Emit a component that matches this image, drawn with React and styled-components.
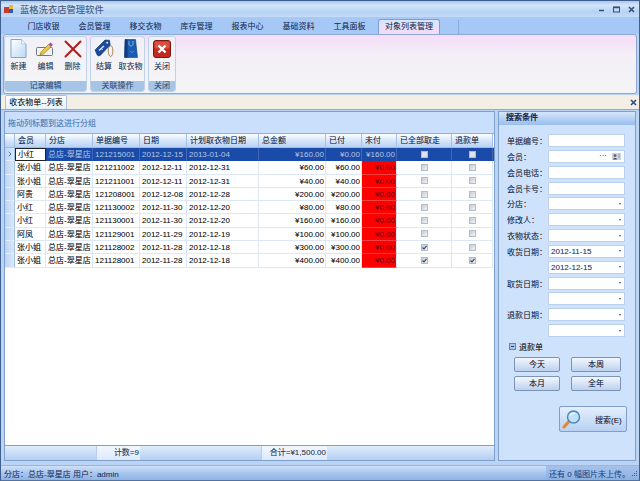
import React from 'react';
import styled, { createGlobalStyle } from 'styled-components';

const Global = createGlobalStyle`
  html, body { margin: 0; padding: 0; background: #bcd4f4; overflow: hidden; }
  * { box-sizing: border-box; }
`;

const COLS = '10px 31px 47px 47px 47px 72px 67px 36px 35px 55px 41px';
const FONT = '"Liberation Sans", "Noto Sans CJK SC", sans-serif';

const Window = styled.div`
  width: 640px;
  height: 481px;
  display: flex;
  flex-direction: column;
  font-family: ${FONT};
  font-size: 8px;
  color: #111;
  text-shadow: 0 0 0.4px rgba(20, 30, 60, 0.3);
  background: #bcd4f4;
  border: 1px solid #3f5f8f;
  border-bottom-color: #54749f;
`;

const TitleBar = styled.div`
  height: 16px;
  display: flex;
  align-items: center;
  padding: 0 3px;
  gap: 6px;
  background: linear-gradient(#a9c6ea, #d3e5fa 25%, #b7d2f4 70%, #c6dcf8);
`;

const TitleText = styled.span`
  flex: 1;
  font-size: 9.3px;
  color: #4a5f80;
`;

const WinControls = styled.div`
  display: flex;
  gap: 8px;
  padding-right: 1px;
`;

const RibbonTabs = styled.div`
  height: 17px;
  display: flex;
  align-items: flex-end;
  padding-left: 17px;
  background: #a6c8f6;
`;

const RibbonTab = styled.div`
  width: ${p => (p.$active ? '62px' : '51px')};
  margin-left: ${p => (p.$active ? '3px' : '0')};
  height: ${p => (p.$active ? '15px' : '14px')};
  line-height: 14px;
  text-align: center;
  color: #1d3558;
  border-radius: 3px 3px 0 0;
  ${p => p.$active && `
    background: linear-gradient(#d9e4fa, #f6dcfa);
    border: 1px solid #7d9fd6;
    border-bottom: none;
  `}
`;

const TabEnd = styled.div`
  width: 1px;
  height: 14px;
  margin-left: 18px;
  background: #8caad6;
`;

const RibbonBody = styled.div`
  height: 60px;
  margin: 0 2px;
  padding: 1px 0;
  display: flex;
  gap: 3px;
  background: linear-gradient(#f6dcfa, #f3eff6 35%, #f4f4f5);
  border: 1px solid #8aa9d6;
  border-radius: 3px;
`;

const RibbonGroup = styled.div`
  width: ${p => p.$w}px;
  display: flex;
  flex-direction: column;
  background: linear-gradient(#f0f0f6, #f6f6f8);
  border: 1px solid #c0d2ea;
  border-radius: 3px;
  overflow: hidden;
`;

const GroupItems = styled.div`
  flex: 1;
  display: flex;
`;

const GroupLabel = styled.div`
  height: 10px;
  line-height: 10px;
  text-align: center;
  color: #35557f;
  background: #a6c4e6;
`;

const BigButton = styled.div`
  width: ${p => p.$w}px;
  display: flex;
  flex-direction: column;
  align-items: center;
  padding-top: 2px;
  gap: 2px;
  color: #1f3d66;
  white-space: nowrap;
`;

const IconBox = styled.div`
  height: 19px;
  display: flex;
  align-items: center;
  justify-content: center;
`;

const DocStrip = styled.div`
  height: 15px;
  margin-top: 1px;
  display: flex;
  align-items: flex-end;
  justify-content: space-between;
  padding: 0 2px 0 4px;
  background: #f3eee6;
  border-bottom: 1px solid #8fabd4;
`;

const DocTab = styled.div`
  width: 62px;
  height: 14px;
  line-height: 13px;
  text-align: center;
  background: linear-gradient(#fff, #e6f0fc);
  border: 1px solid #a9c0e0;
  border-bottom: none;
  border-radius: 2px 2px 0 0;
`;

const DocClose = styled.div`
  height: 14px;
  display: flex;
  align-items: center;
`;

const Main = styled.div`
  flex: 1;
  display: flex;
  gap: 3px;
  padding: 1px 3px 2px 3px;
  min-height: 0;
`;

const GridPanel = styled.div`
  width: 491px;
  display: flex;
  flex-direction: column;
  background: #fff;
  border: 1px solid #7f9fcc;
`;

const GroupHint = styled.div`
  height: 22px;
  padding: 5px 3px 0;
  color: #4f7fbc;
  background: #c9dffb;
  border-bottom: 1px solid #8fb0dc;
`;

const HeadRow = styled.div`
  display: grid;
  grid-template-columns: ${COLS};
  height: 14px;
  border-bottom: 1px solid #9dbbe4;
`;

const HeadCell = styled.div`
  padding-left: 3px;
  line-height: 13px;
  color: #1a2a44;
  background: linear-gradient(#fbfdff, #d3e4fa 55%, #b9d2f4);
  border-right: 1px solid #a4c0e6;
  white-space: nowrap;
`;

const Rows = styled.div`
  flex: 1;
`;

const Row = styled.div`
  display: grid;
  grid-template-columns: ${COLS};
  height: 13.3px;
  color: ${p => (p.$selected ? '#b6cbea' : '#111')};
  background: ${p => (p.$selected ? '#1b4ba8' : '#fff')};
`;

const RowHead = styled.div`
  display: flex;
  align-items: center;
  justify-content: center;
  background: linear-gradient(90deg, #bcd4f4, #d9e8fb);
  border-right: 1px solid #a4c0e6;
  border-bottom: 1px solid #e4eefb;
`;

const Cell = styled.div`
  padding: 0 ${p => (p.$right ? '1px' : '3px')} 0 ${p => (p.$pad ?? 3)}px;
  line-height: 13px;
  overflow: hidden;
  text-align: ${p => (p.$right ? 'right' : 'left')};
  white-space: nowrap;
  border-right: 1px solid ${p => (p.$selected ? '#3f69b8' : '#dce8f8')};
  border-bottom: 1px solid ${p => (p.$selected ? '#1b4ba8' : '#dce8f8')};
`;

const FocusCell = styled(Cell)`
  color: #111;
  background: #fff;
  border: 1px solid #222;
  line-height: 11px;
`;

const UnpaidCell = styled(Cell)`
  color: ${p => (p.$selected ? '#b6cbea' : '#7c0008')};
  background: ${p => (p.$selected ? 'transparent' : '#ff0000')};
  border-bottom-color: ${p => (p.$selected ? '#1b4ba8' : '#f04040')};
`;

const CheckCell = styled(Cell)`
  display: flex;
  align-items: center;
  justify-content: center;
  padding: 0;
`;

const Check = styled.span`
  width: 7px;
  height: 7px;
  display: flex;
  align-items: center;
  justify-content: center;
  background: ${p => (p.$selected ? '#dfe3ea' : 'linear-gradient(135deg, #c4cad4, #f2f4f7)')};
  border: 1px solid #b4bcc8;
`;

const FootRow = styled.div`
  display: grid;
  grid-template-columns: 91px 44px 121px 66px 1fr;
  height: 15px;
  background: linear-gradient(#e0edfc, #b4cff3);
  border-top: 1px solid #7f9fcc;
`;

const FootCell = styled.div`
  line-height: 13px;
  text-align: right;
  padding-right: 1px;
  color: #2a3c58;
  white-space: nowrap;
  background: ${p => (p.$filled ? 'linear-gradient(#f2f7fe, #dce9fb)' : 'transparent')};
  border-left: ${p => (p.$filled ? '1px solid #b6cdec' : 'none')};
`;

const SearchPanel = styled.div`
  width: 138px;
  display: flex;
  flex-direction: column;
  background: #cfe2fb;
  border: 1px solid #7f9fcc;
`;

const PanelHead = styled.div`
  height: 13px;
  line-height: 12px;
  padding-left: 7px;
  font-weight: bold;
  color: #122c5c;
  background: linear-gradient(#d6e7fc, #98bdee);
`;

const Form = styled.div`
  display: grid;
  grid-template-columns: 41px 77px;
  grid-auto-rows: 13px;
  row-gap: 2.85px;
  padding: 9px 0 0 8px;
  align-items: center;
`;

const Label = styled.label`
  color: #1d2b44;
  white-space: nowrap;
`;

const Field = styled.div`
  grid-column: 2;
  height: 13px;
  display: flex;
  align-items: center;
  justify-content: space-between;
  padding: 0 3px 0 2px;
  color: #1b3a6c;
  background: #fff;
  border: 1px solid #b9d0ee;
`;

const Arrow = styled.span`
  margin-left: auto;
  width: 0;
  height: 0;
  border-left: 1.5px solid transparent;
  border-right: 1.5px solid transparent;
  border-top: 2px solid #2a4a7a;
`;

const Dots = styled.span`
  margin-left: auto;
  margin-right: 5px;
  line-height: 8px;
  color: #444;
`;

const RefundRow = styled.div`
  display: flex;
  align-items: center;
  gap: 3px;
  margin: 3px 0 0 10px;
  height: 12px;
`;

const Expander = styled.span`
  width: 7px;
  height: 7px;
  display: flex;
  align-items: center;
  justify-content: center;
  background: #a9c5ec;
  border: 1px solid #5c86c4;
`;

const Bar = styled.span`
  width: 3px;
  height: 1px;
  background: #1d3f8c;
`;

const QuickGrid = styled.div`
  display: grid;
  grid-template-columns: 46px 50px;
  grid-auto-rows: 15px;
  column-gap: 11px;
  row-gap: 4px;
  margin: 5px 0 0 15px;
`;

const QuickButton = styled.div`
  text-align: center;
  line-height: 13px;
  color: #15233c;
  background: linear-gradient(#f2f7fe, #bcd1ee);
  border: 1px solid #7c93b6;
  border-radius: 2px;
`;

const SearchButton = styled.div`
  width: 68px;
  height: 26px;
  margin: 15px 0 0 60px;
  display: flex;
  align-items: center;
  gap: 13px;
  padding-left: 2px;
  color: #15233c;
  background: linear-gradient(#e4effd, #b8d1f2);
  border: 1px solid #7f9fcc;
  border-radius: 2px;
`;

const StatusBar = styled.div`
  height: 15px;
  margin-top: 2px;
  display: flex;
  align-items: center;
  padding-left: 3px;
  color: #1f3a66;
  background: linear-gradient(#cfe0f8, #a8c6ee 50%, #8fb3e6);
  border-top: 1px solid #9db5d6;
`;

const StatusLeft = styled.div`
  flex: 1;
`;

const StatusRight = styled.div`
  width: 93px;
  height: 100%;
  display: flex;
  align-items: center;
  justify-content: space-between;
  padding: 0 1px 0 3px;
  color: #2a4f88;
  white-space: nowrap;
  background: linear-gradient(#a6c2ea, #8cb0e4);
`;

const NewIcon = () => (
  <svg width="17" height="19" viewBox="0 0 17 19">
    <defs><linearGradient id="pg" x1="0" y1="0" x2="1" y2="1"><stop offset="0" stopColor="#fff" /><stop offset="1" stopColor="#bcd8f4" /></linearGradient></defs>
    <path d="M1 .5H11.5L16 5V18.5H1Z" fill="url(#pg)" stroke="#7fa6d4" strokeWidth="1" />
    <path d="M11.5 .5V5H16" fill="#eef5fd" stroke="#9fc0e2" strokeWidth=".7" />
  </svg>
);

const EditIcon = () => (
  <svg width="19" height="14" viewBox="0 0 19 14">
    <rect x=".5" y="5.5" width="16" height="8" rx="1" fill="#f4f4ee" stroke="#6a7684" strokeWidth="1" />
    <path d="M5 10L12.5 2.5L15 4.8L7.5 12L4 12.6Z" fill="#f0c83c" stroke="#8a6a1c" strokeWidth=".6" />
    <path d="M12.5 2.5L14.6 .5L17 2.8L15 4.8Z" fill="#a050c0" />
  </svg>
);

const CrossIcon = () => (
  <svg width="18" height="18" viewBox="0 0 18 18">
    <path d="M1.5 1.5L16.5 16.5M16.5 1.5L1.5 16.5" stroke="#b01c18" strokeWidth="2" strokeLinecap="round" />
  </svg>
);

const TagIcon = () => (
  <svg width="20" height="19" viewBox="0 0 20 19">
    <ellipse cx="16.6" cy="12" rx="2.3" ry="5.5" fill="none" stroke="#a88a64" strokeWidth="1" />
    <path d="M1 11L11 1L15.5 1.2L16.2 6L6.2 16.5Q4.5 17.5 3.2 16Z" fill="#1a4a9e" stroke="#102c66" strokeWidth=".6" />
    <path d="M5 11.5L10 7" stroke="#d6e4f8" strokeWidth="1.5" />
    <path d="M7 9L8.5 11" stroke="#d6e4f8" strokeWidth="1" />
    <circle cx="13.2" cy="3.8" r="1" fill="#dfe9f8" />
  </svg>
);

const BagIcon = () => (
  <svg width="14" height="19" viewBox="0 0 14 19">
    <path d="M1 .5H11.5L13.5 18.5H.5Z" fill="#1b5bb0" stroke="#123c80" strokeWidth=".6" />
    <path d="M1 .5H3.5V18.5H.5Z" fill="#0e3a80" />
    <path d="M5 2V5.5C5.5 7.5 8.5 7.5 9 5.5V2" fill="none" stroke="#9cd0f0" strokeWidth=".8" />
    <path d="M6 12L8 13.5L10 12" fill="none" stroke="#5a9ce0" strokeWidth=".8" />
  </svg>
);

const CloseIcon = () => (
  <svg width="18" height="18" viewBox="0 0 18 18">
    <rect x=".5" y=".5" width="17" height="17" rx="2.5" fill="#c22a20" stroke="#7c1610" />
    <rect x="1.5" y="1.5" width="15" height="7" rx="1.5" fill="#dc4e40" />
    <path d="M5.5 5.5L12.5 12.5M12.5 5.5L5.5 12.5" stroke="#fff" strokeWidth="2.4" />
  </svg>
);

const GlassIcon = () => (
  <svg width="20" height="20" viewBox="0 0 20 20">
    <path d="M2 18L7 12.5" stroke="#e08a28" strokeWidth="3" strokeLinecap="round" />
    <circle cx="11.5" cy="8" r="6" fill="#bfe2f8" stroke="#4a86b8" strokeWidth="1.4" />
    <path d="M8 6.5C9 4.5 11 4 13 4.5" fill="none" stroke="#fff" strokeWidth="1.2" />
  </svg>
);

const AppIcon = () => (
  <svg width="10" height="10" viewBox="0 0 10 10">
    <rect x="0" y="3" width="5" height="6" fill="#c8402c" />
    <rect x="5" y="1" width="4" height="4" fill="#e8b83c" />
    <rect x="5" y="5" width="4" height="4" fill="#2c5cb0" />
  </svg>
);

const Grip = () => (
  <svg width="6" height="6" viewBox="0 0 6 6">
    <path d="M4 1h1v1H4zM2 3h1v1H2zM4 3h1v1H4zM0 5h1v1H0zM2 5h1v1H2zM4 5h1v1H4z" fill="#3f6498" />
  </svg>
);

const Tick = () => (
  <svg width="5" height="5" viewBox="0 0 5 5">
    <path d="M.5 2.5L2 4L4.5 .8" fill="none" stroke="#2a3f70" strokeWidth="1.1" />
  </svg>
);

const SmallX = ({ color = '#33507c' }) => (
  <svg width="7" height="7" viewBox="0 0 7 7">
    <path d="M1 1L6 6M6 1L1 6" stroke={color} strokeWidth="1.6" />
  </svg>
);

const RowArrow = () => (
  <svg width="4" height="6" viewBox="0 0 4 6">
    <path d="M.8 .8L3 3L.8 5.2" fill="none" stroke="#3a6cc0" strokeWidth="1" />
  </svg>
);

const tabs = ['门店收银', '会员管理', '移交衣物', '库存管理', '报表中心', '基础资料', '工具面板'];
const heads = ['', '会员', '分店', '单据编号', '日期', '计划取衣物日期', '总金额', '已付', '未付', '已全部取走', '退款单'];

const orders = [
  { who: '小红', no: '121215001', date: '2012-12-15', plan: '2013-01-04', total: '¥160.00', paid: '¥0.00', due: '¥160.00' },
  { who: '张小姐', no: '121211002', date: '2012-12-11', plan: '2012-12-31', total: '¥60.00', paid: '¥60.00', due: '¥0.00' },
  { who: '张小姐', no: '121211001', date: '2012-12-11', plan: '2012-12-31', total: '¥40.00', paid: '¥40.00', due: '¥0.00' },
  { who: '阿贵', no: '121208001', date: '2012-12-08', plan: '2012-12-28', total: '¥200.00', paid: '¥200.00', due: '¥0.00' },
  { who: '小红', no: '121130002', date: '2012-11-30', plan: '2012-12-20', total: '¥80.00', paid: '¥80.00', due: '¥0.00' },
  { who: '小红', no: '121130001', date: '2012-11-30', plan: '2012-12-20', total: '¥160.00', paid: '¥160.00', due: '¥0.00' },
  { who: '阿凤', no: '121129001', date: '2012-11-29', plan: '2012-12-19', total: '¥100.00', paid: '¥100.00', due: '¥0.00' },
  { who: '张小姐', no: '121128002', date: '2012-11-28', plan: '2012-12-18', total: '¥300.00', paid: '¥300.00', due: '¥0.00', taken: true },
  { who: '张小姐', no: '121128001', date: '2012-11-28', plan: '2012-12-18', total: '¥400.00', paid: '¥400.00', due: '¥0.00', taken: true, refund: true },
];

export default function App() {
  return (
    <Window>
      <Global />
      <TitleBar>
        <AppIcon />
        <TitleText>蓝格洗衣店管理软件</TitleText>
        <WinControls>
          <svg width="7" height="7" viewBox="0 0 7 7"><path d="M1 4.5H6" stroke="#33507c" strokeWidth="1.5" /></svg>
          <svg width="7" height="7" viewBox="0 0 7 7"><rect x=".5" y="1" width="6" height="5" fill="none" stroke="#33507c" /><path d="M.5 1.5H6.5" stroke="#33507c" strokeWidth="1.4" /></svg>
          <SmallX />
        </WinControls>
      </TitleBar>

      <RibbonTabs>
        {tabs.map(t => <RibbonTab key={t}>{t}</RibbonTab>)}
        <RibbonTab $active>对象列表管理</RibbonTab>
        <TabEnd />
      </RibbonTabs>

      <RibbonBody>
        <RibbonGroup $w={83}>
          <GroupItems>
            <BigButton $w={27}><IconBox><NewIcon /></IconBox>新建</BigButton>
            <BigButton $w={27}><IconBox><EditIcon /></IconBox>编辑</BigButton>
            <BigButton $w={27}><IconBox><CrossIcon /></IconBox>删除</BigButton>
          </GroupItems>
          <GroupLabel>记录编辑</GroupLabel>
        </RibbonGroup>
        <RibbonGroup $w={55}>
          <GroupItems>
            <BigButton $w={26}><IconBox><TagIcon /></IconBox>结算</BigButton>
            <BigButton $w={27}><IconBox><BagIcon /></IconBox>取衣物</BigButton>
          </GroupItems>
          <GroupLabel>关联操作</GroupLabel>
        </RibbonGroup>
        <RibbonGroup $w={28}>
          <GroupItems>
            <BigButton $w={26}><IconBox><CloseIcon /></IconBox>关闭</BigButton>
          </GroupItems>
          <GroupLabel>关闭</GroupLabel>
        </RibbonGroup>
      </RibbonBody>

      <DocStrip>
        <DocTab>收衣物单--列表</DocTab>
        <DocClose><SmallX color="#2c4a80" /></DocClose>
      </DocStrip>

      <Main>
        <GridPanel>
          <GroupHint>拖动列标题到这进行分组</GroupHint>
          <HeadRow>
            {heads.map((h, i) => <HeadCell key={i}>{h}</HeadCell>)}
          </HeadRow>
          <Rows>
            {orders.map((o, i) => {
              const sel = i === 0;
              const Who = sel ? FocusCell : Cell;
              return (
                <Row key={o.no} $selected={sel}>
                  <RowHead>{sel && <RowArrow />}</RowHead>
                  <Who $selected={sel} $pad={2}>{o.who}</Who>
                  <Cell $selected={sel} $pad={2}>总店-翠星店</Cell>
                  <Cell $selected={sel} $pad={2}>{o.no}</Cell>
                  <Cell $selected={sel} $pad={2}>{o.date}</Cell>
                  <Cell $selected={sel} $pad={2}>{o.plan}</Cell>
                  <Cell $selected={sel} $right>{o.total}</Cell>
                  <Cell $selected={sel} $right>{o.paid}</Cell>
                  <UnpaidCell $selected={sel} $right>{o.due}</UnpaidCell>
                  <CheckCell $selected={sel}><Check $selected={sel}>{o.taken && <Tick />}</Check></CheckCell>
                  <CheckCell $selected={sel}><Check $selected={sel}>{o.refund && <Tick />}</Check></CheckCell>
                </Row>
              );
            })}
          </Rows>
          <FootRow>
            <FootCell />
            <FootCell $filled>计数=9</FootCell>
            <FootCell />
            <FootCell $filled>合计=¥1,500.00</FootCell>
            <FootCell />
          </FootRow>
        </GridPanel>

        <SearchPanel>
          <PanelHead>搜索条件</PanelHead>
          <Form>
            <Label>单据编号：</Label><Field />
            <Label>会员：</Label>
            <Field>
              <Dots>···</Dots>
              <svg width="9" height="7" viewBox="0 0 9 7"><rect width="9" height="7" fill="#c8d4e4" /><circle cx="3" cy="2.6" r="1.4" fill="#7a5a3c" /><path d="M1 6.5C1 4.5 5 4.5 5 6.5Z" fill="#44506a" /><path d="M6 2H8M6 4H8" stroke="#7488a8" strokeWidth=".7" /></svg>
            </Field>
            <Label>会员电话：</Label><Field />
            <Label>会员卡号：</Label><Field />
            <Label>分店：</Label><Field><Arrow /></Field>
            <Label>修改人：</Label><Field><Arrow /></Field>
            <Label>衣物状态：</Label><Field><Arrow /></Field>
            <Label>收货日期：</Label><Field>2012-11-15<Arrow /></Field>
            <Field>2012-12-15<Arrow /></Field>
            <Label>取货日期：</Label><Field><Arrow /></Field>
            <Field><Arrow /></Field>
            <Label>退款日期：</Label><Field><Arrow /></Field>
            <Field><Arrow /></Field>
          </Form>
          <RefundRow><Expander><Bar /></Expander>退款单</RefundRow>
          <QuickGrid>
            <QuickButton>今天</QuickButton>
            <QuickButton>本周</QuickButton>
            <QuickButton>本月</QuickButton>
            <QuickButton>全年</QuickButton>
          </QuickGrid>
          <SearchButton><GlassIcon />搜索(E)</SearchButton>
        </SearchPanel>
      </Main>

      <StatusBar>
        <StatusLeft>分店：总店-翠星店  用户：admin</StatusLeft>
        <StatusRight>还有 0 幅图片未上传。<Grip /></StatusRight>
      </StatusBar>
    </Window>
  );
}
